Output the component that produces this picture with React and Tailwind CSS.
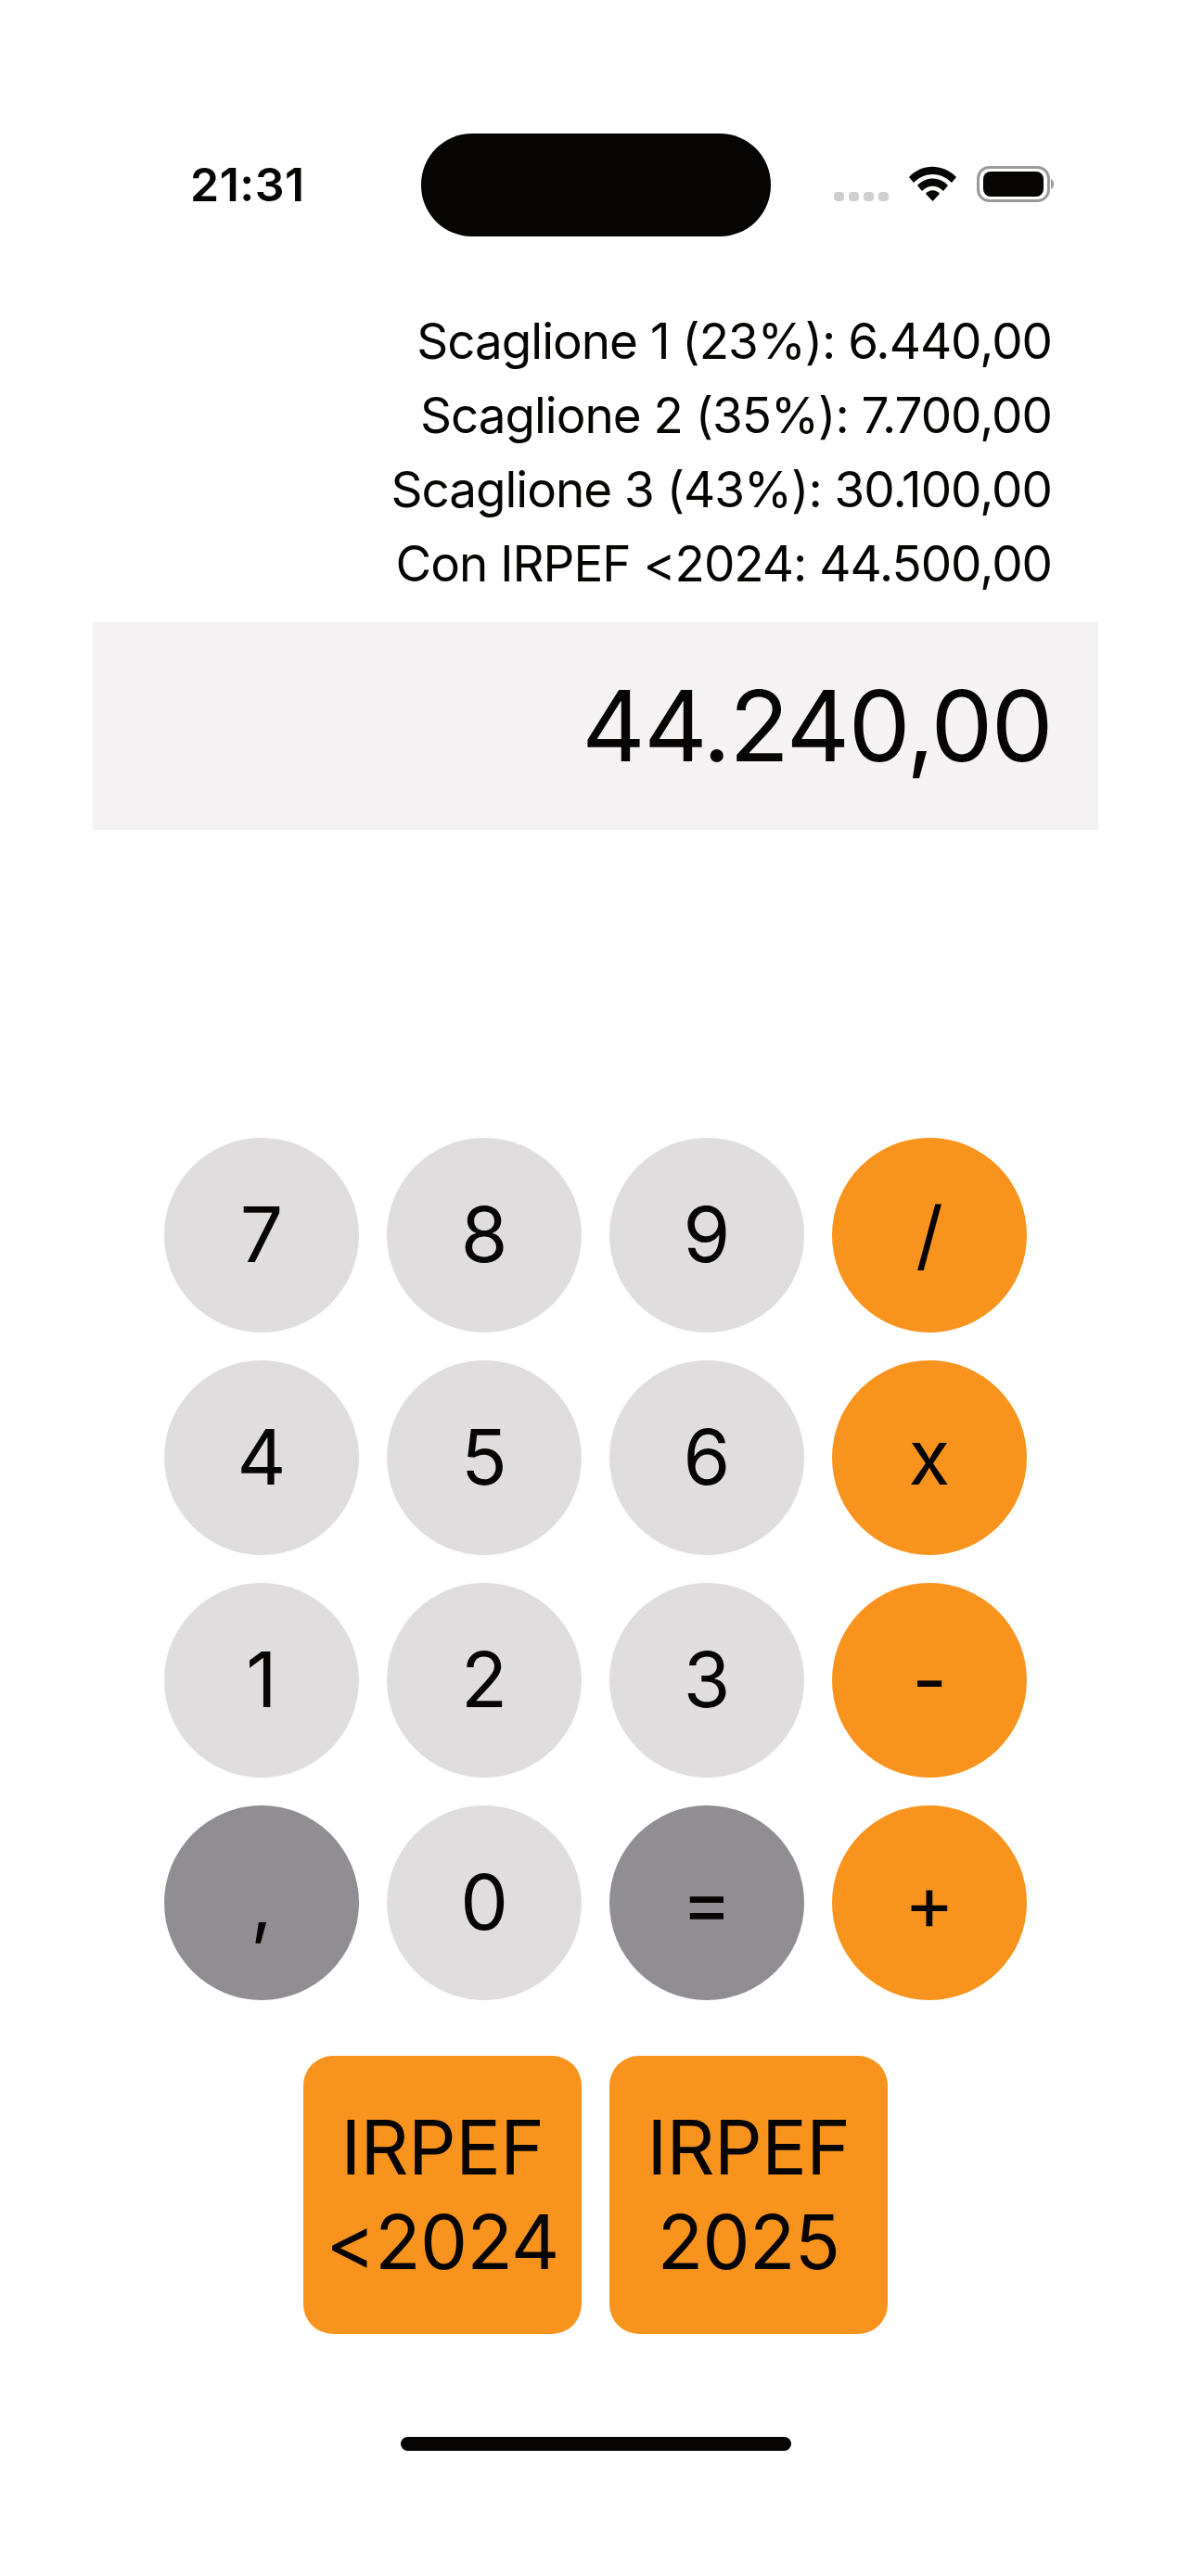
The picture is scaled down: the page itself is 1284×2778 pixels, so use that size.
const font = { fontFamily: "Inter, 'Liberation Sans', sans-serif" };

function Key({ label, tone }) {
  const toneClass =
    tone === "orange" ? "bg-[#f8941e]" : tone === "dark" ? "bg-[#908e93]" : "bg-[#dfddde]";
  return (
    <div className={`w-[210px] h-[210px] rounded-full flex items-center justify-center text-[82px] leading-none text-[#060503] ${toneClass}`}>
      {label}
    </div>
  );
}

const rows = [
  ["7", "light"], ["8", "light"], ["9", "light"], ["/", "orange"],
  ["4", "light"], ["5", "light"], ["6", "light"], ["x", "orange"],
  ["1", "light"], ["2", "light"], ["3", "light"], ["-", "orange"],
  [",", "dark"], ["0", "light"], ["=", "dark"], ["+", "orange"],
];

const lines = [
  "Scaglione 1 (23%): 6.440,00",
  "Scaglione 2 (35%): 7.700,00",
  "Scaglione 3 (43%): 30.100,00",
  "Con IRPEF <2024: 44.500,00",
];

export default function App() {
  return (
    <div style={font} className="w-[1284px] h-[2778px] bg-white text-[#060503] overflow-hidden">
      <div className="flex pt-[144px] h-[328px] items-start">
        <div className="ml-[205px] w-[249px] mt-[25px] text-[50px] leading-[60px] font-semibold tracking-[0.5px]">21:31</div>
        <div className="w-[377px] h-[111px] rounded-[55px] bg-[#060503]" />
        <div className="ml-[68px] mt-[35px] flex">
          <svg width="240" height="42" viewBox="0 0 240 42">
            <rect x="0" y="28" width="11" height="10" rx="4" fill="#cfcecd" />
            <rect x="16" y="28" width="11" height="10" rx="4" fill="#cfcecd" />
            <rect x="32" y="28" width="11" height="10" rx="4" fill="#cfcecd" />
            <rect x="48" y="28" width="11" height="10" rx="4" fill="#cfcecd" />
            <path d="M81 12 C95 -3 117 -3 132 12 L127 18 C115 6 98 6 86 18 Z" fill="#060503" />
            <path d="M90 21 C99 11 114 11 123 21 L118 27 C111 20 102 20 95 27 Z" fill="#060503" />
            <path d="M99 30 C103 25 110 25 114 30 L106.5 38 Z" fill="#060503" />
            <rect x="155.5" y="1.5" width="76" height="36" rx="12" fill="none" stroke="#9a9a9a" strokeWidth="3" />
            <rect x="161" y="6" width="65" height="27" rx="8" fill="#060503" />
            <path d="M234 14 C238 15 238 24 234 25 Z" fill="#9a9a9a" />
          </svg>
        </div>
      </div>

      <div className="mx-[100px] w-[1084px]">
        <div className="pr-[50px] text-right text-[53px] leading-[80px] tracking-[-1px]">
          {lines.map((l) => (
            <div key={l}>{l}</div>
          ))}
        </div>
        <div className="mt-[23px] h-[224px] bg-[#f4f2f3] pr-[50px] flex items-center justify-end text-[106px] leading-none tracking-[-1.6px]">
          44.240,00
        </div>
      </div>

      <div className="mt-[332px] w-[930px] mx-auto grid grid-cols-4 gap-[30px]">
        {rows.map(([label, tone]) => (
          <Key key={label} label={label} tone={tone} />
        ))}
      </div>

      <div className="mt-[60px] flex justify-center gap-[30px]">
        <div className="w-[300px] h-[300px] rounded-[32px] bg-[#f8941e] flex items-center justify-center text-center text-[81px] leading-[102px] tracking-[-0.6px]">
          IRPEF<br />&lt;2024
        </div>
        <div className="w-[300px] h-[300px] rounded-[32px] bg-[#f8941e] flex items-center justify-center text-center text-[81px] leading-[102px] tracking-[-0.6px]">
          IRPEF<br />2025
        </div>
      </div>

      <div className="mt-[111px] mx-auto w-[421px] h-[15px] rounded-full bg-[#060503]" />
    </div>
  );
}
